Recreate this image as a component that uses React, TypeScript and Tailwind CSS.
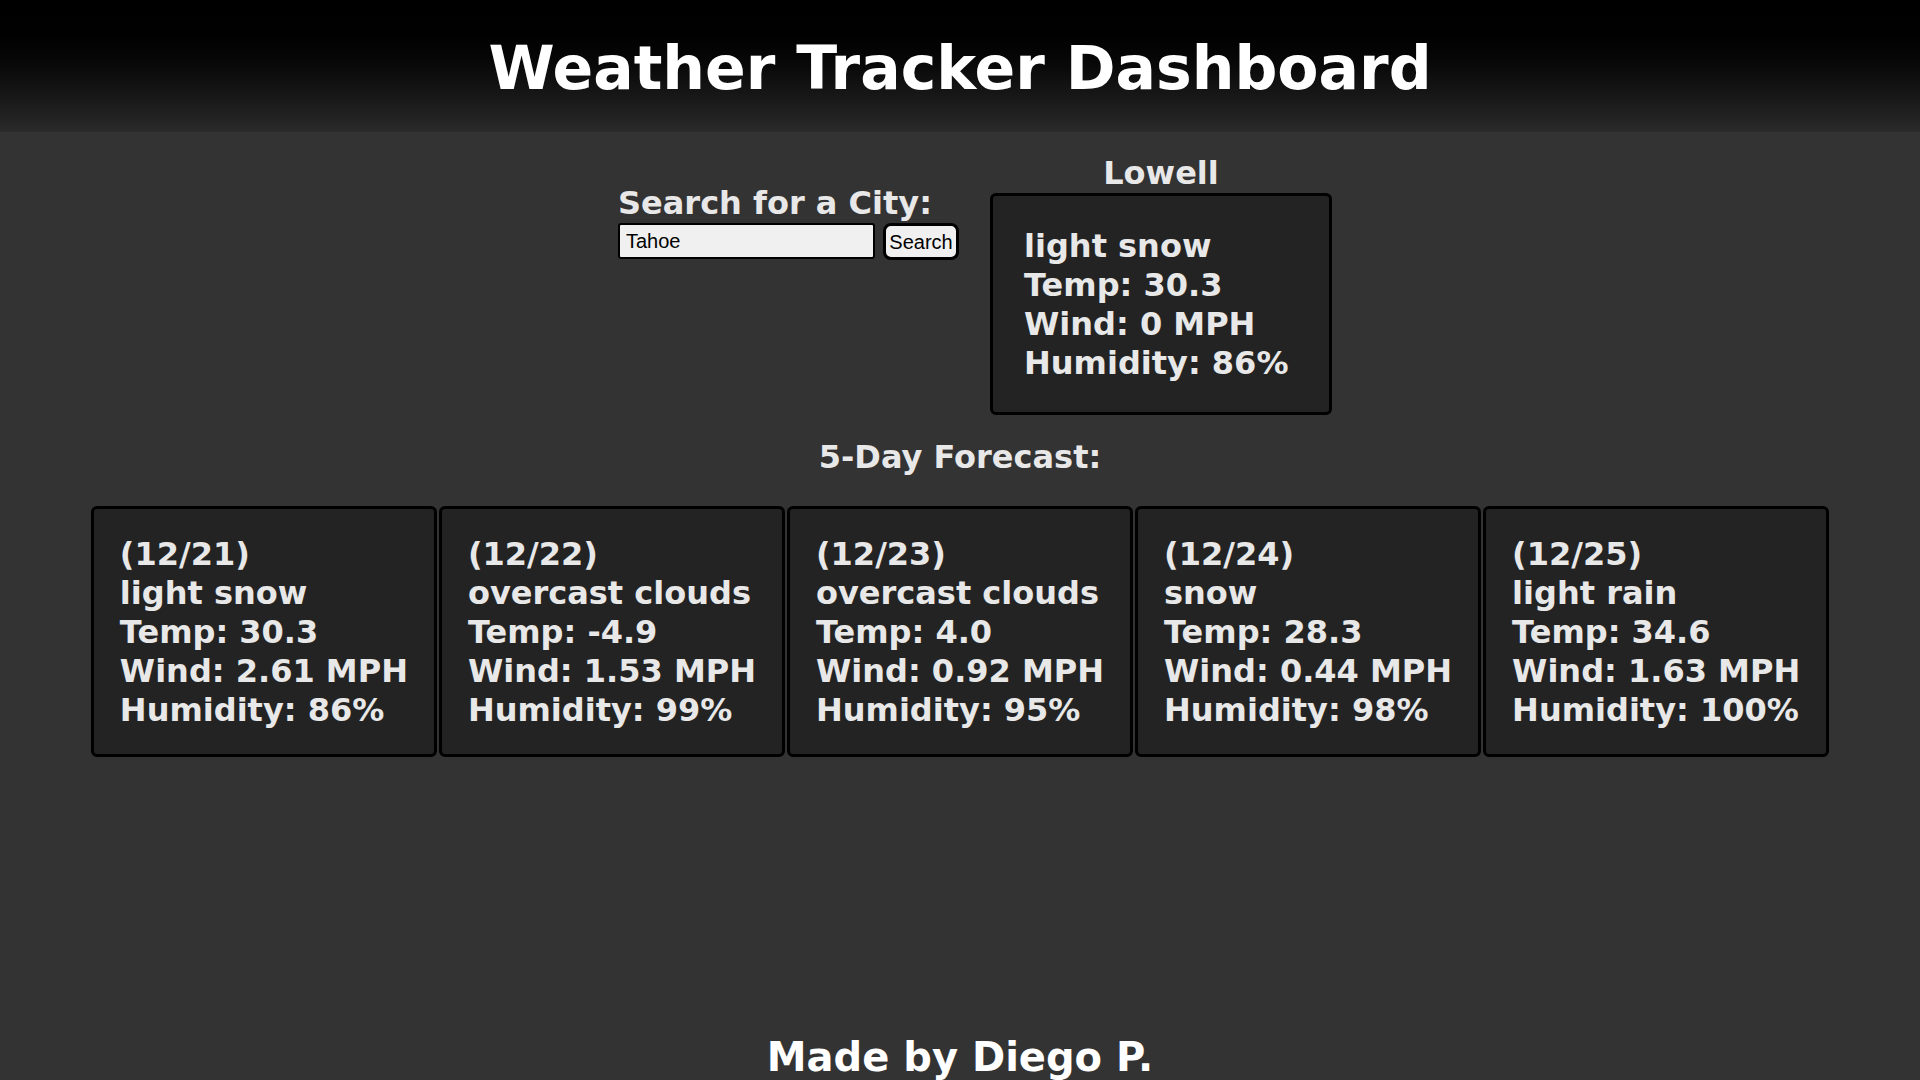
import { useState } from "react";

type Forecast = {
  date: string;
  desc: string;
  temp: string;
  wind: string;
  humidity: string;
};

const FORECAST: Forecast[] = [
  { date: "12/21", desc: "light snow", temp: "30.3", wind: "2.61", humidity: "86" },
  { date: "12/22", desc: "overcast clouds", temp: "-4.9", wind: "1.53", humidity: "99" },
  { date: "12/23", desc: "overcast clouds", temp: "4.0", wind: "0.92", humidity: "95" },
  { date: "12/24", desc: "snow", temp: "28.3", wind: "0.44", humidity: "98" },
  { date: "12/25", desc: "light rain", temp: "34.6", wind: "1.63", humidity: "100" },
];

const ForecastCard = ({ date, desc, temp, wind, humidity }: Forecast) => {
  return (
    <div className="rounded-md border-[3px] border-black bg-[#232323] px-[26px] pt-[26px] pb-[24px] text-[32px] leading-[39px]">
      <p>({date})</p>
      <p>{desc}</p>
      <p>Temp: {temp}</p>
      <p>Wind: {wind} MPH</p>
      <p>Humidity: {humidity}%</p>
    </div>
  );
};

const App = () => {
  const [city, setCity] = useState("Tahoe");

  return (
    <div className="min-h-screen bg-[#333333] font-['DejaVu_Sans',Verdana,sans-serif] font-bold text-[#e8e8e8]">
      <header className="bg-gradient-to-b from-black to-[#2a2a2a] pt-[31px] pb-[27px] text-center">
        <h1 className="text-[60px] leading-[74px] text-white">Weather Tracker Dashboard</h1>
      </header>

      <main className="flex flex-col items-center">
        <section className="mt-[22px] flex items-start justify-center gap-[31px] pl-[30px]">
          <div className="mt-[30px] flex w-[341px] flex-col">
            <h2 className="text-[32px] leading-[39px]">Search for a City:</h2>
            <form
              className="flex gap-2"
              onSubmit={(e) => {
                e.preventDefault();
              }}
            >
              <input
                value={city}
                onChange={(e) => setCity(e.target.value)}
                className="h-[36px] w-[257px] rounded-[3px] border-2 border-black bg-[#f0f0f0] pl-[6px] font-['Liberation_Sans',Arial,sans-serif] text-[20px] font-normal text-black"
              />
              <button className="h-[37px] w-[76px] rounded-lg border-[3px] border-black bg-[#f0f0f0] px-[3px] font-['Liberation_Sans',Arial,sans-serif] text-[20px] font-normal text-black">
                Search
              </button>
            </form>
          </div>

          <div className="flex flex-col items-center">
            <h2 className="text-[32px] leading-[39px]">Lowell</h2>
            <div className="w-[342px] rounded-md border-[3px] border-black bg-[#232323] pt-[31px] pb-[29px] pl-[31px] pr-[29px] text-[32px] leading-[39px]">
              <p>light snow</p>
              <p>Temp: 30.3</p>
              <p>Wind: 0 MPH</p>
              <p>Humidity: 86%</p>
            </div>
          </div>
        </section>

        <h2 className="mt-[23px] text-[32px] leading-[39px]">5-Day Forecast:</h2>
        <div className="mt-[29px] flex justify-center gap-[2px]">
          {FORECAST.map((day) => (
            <ForecastCard key={day.date} {...day} />
          ))}
        </div>

        <footer className="mt-[277px] pb-4 text-[40px] leading-[47px] text-white">
          Made by Diego P.
        </footer>
      </main>
    </div>
  );
};

export default App;
